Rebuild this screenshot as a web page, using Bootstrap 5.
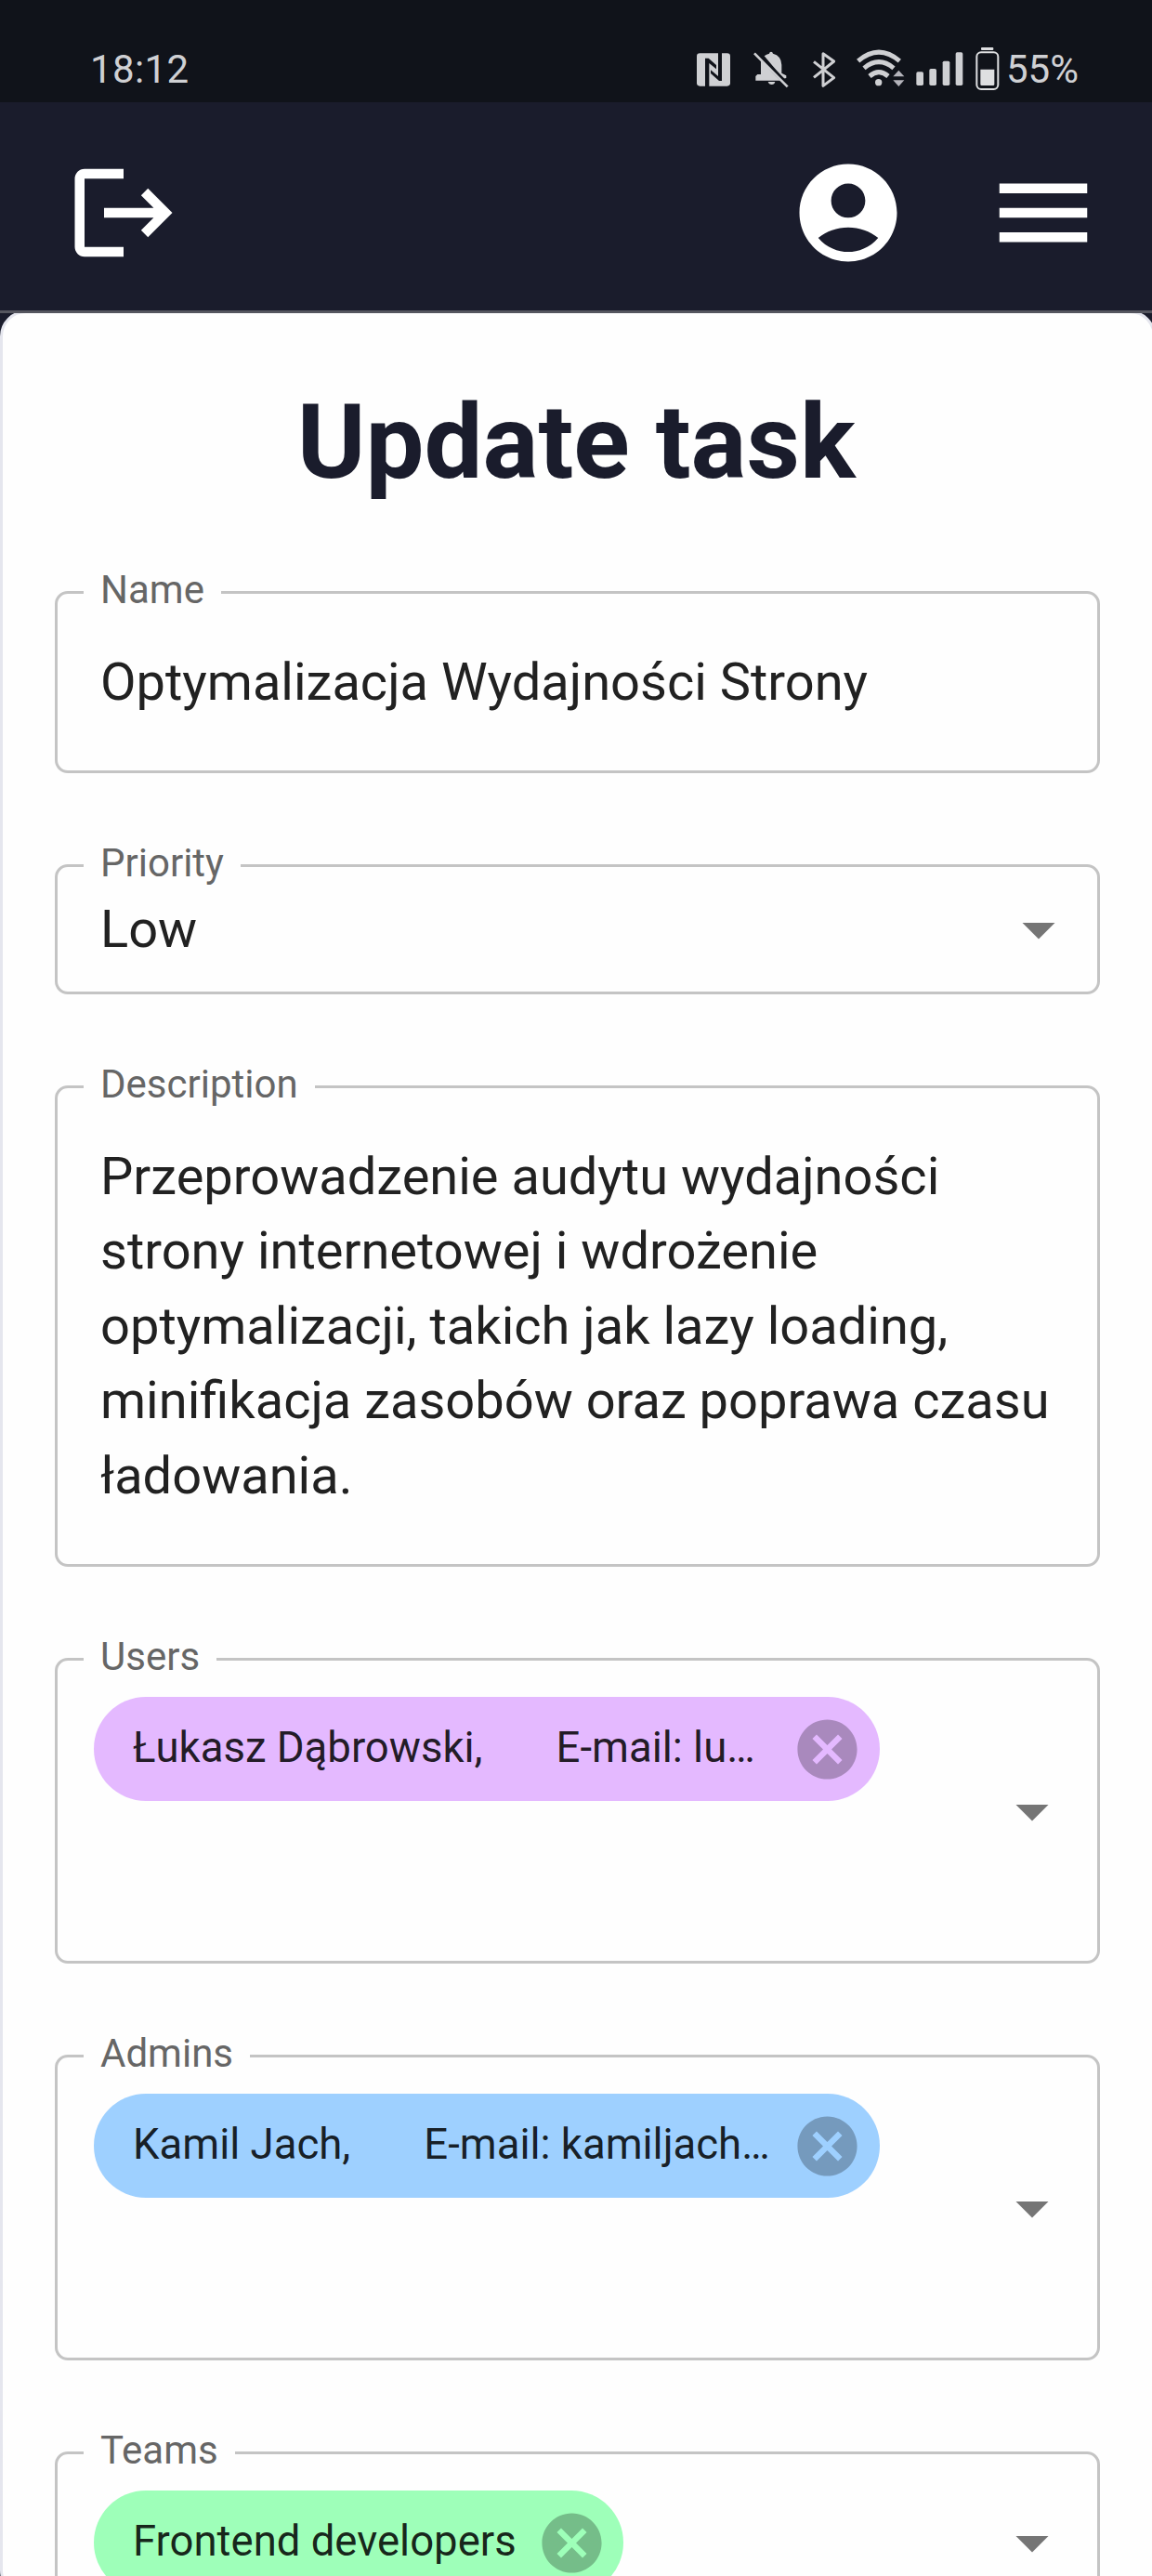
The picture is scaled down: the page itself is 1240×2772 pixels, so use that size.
<!DOCTYPE html>
<html lang="pl">
<head>
<meta charset="utf-8">
<meta name="viewport" content="width=device-width, initial-scale=1">
<title>Update task</title>
<link href="https://cdn.jsdelivr.net/npm/bootstrap@5.3.0/dist/css/bootstrap.min.css" rel="stylesheet">
<style>
  body { font-family: Roboto, "Liberation Sans", sans-serif; background: #1a1c2c; color: #212121; }
  .status-bar { height: 110px; padding: 37px 79px 0 97px; background: #10131a; color: #cfd0d3; font-size: 42px; line-height: 70px; }
  .status-bar svg { height: 48px; }
  .clock { letter-spacing: .4px; padding-top: 2px; }
  .g-bell { margin-left: 24.67px; }
  .g-bt { margin-left: 26px; }
  .g-wifi { margin-left: 22.33px; }
  .g-signal { margin-left: 12.67px; }
  .g-battery { margin-left: 13px; }
  .g-level { margin-left: 7.4px; padding-top: 2px; }
  .app-bar { height: 227px; padding: 55.75px 53.6px 0 70px; border-bottom: 3px solid #55565f; background: #1a1c2c; position: relative; z-index: 1; }
  .app-bar .tools { gap: 84px; }
  .app-bar svg { width: 126px; height: 126px; display: block; }
  .sheet { width: 1243.5px; height: 2460px; margin-top: -3px; padding: 71.5px 59px 0 56px; background: #fefefe; border: 3px solid #e5e6ee; border-radius: 28px; position: relative; z-index: 0; }
  .sheet h1 { font-size: 112px; line-height: 134px; color: #1a1c2c; margin-bottom: 93.5px; }
  .fields { gap: 98px; width: 1125px; }
  .field { border: 3px solid #c4c4c4; border-radius: 14px; padding: 54.75px 46px; font-size: 56px; line-height: 80.5px; }
  .field-select { padding: 26.75px 21px 26.75px 46px; height: 140px; }
  .field-multi { padding: 39px 28px 39px 39px; min-height: 329px; }
  .field-team { min-height: 196px; }
  .field-label { top: -34px; left: 28px; padding: 0 18px; background: #fefefe; color: #666; font-size: 42px; line-height: 60px; }
  .caret { width: 84px; height: 84px; fill: #757575; flex: none; }
  .pill { height: 112px; border-radius: 56px; padding: 0 17.5px 0 42px; font-size: 45.5px; line-height: 68px; color: rgba(0,0,0,.87); }
  .pill-text { padding-bottom: 3px; }
  .pill-wide { width: 845.5px; }
  .pill svg { width: 77px; height: 77px; fill: rgba(0,0,0,.26); }
  .pill-gap { padding-left: 79px; }
  .pill-user { background: #e4b9ff; }
  .pill-admin { background: #9ed0ff; }
  .pill-team { background: #9effb9; width: 570px; }
</style>
<script src="https://cdn.jsdelivr.net/npm/bootstrap@5.3.0/dist/js/bootstrap.bundle.min.js"></script>
</head>
<body>
<div class="vh-100 overflow-hidden">
  <div class="status-bar d-flex justify-content-between align-items-center">
    <span class="clock">18:12</span>
    <div class="d-flex align-items-center">
      <svg width="36" viewBox="93 60 108 144" fill="#cfd0d3"><rect x="93" y="82" width="108" height="106" rx="10"/><path d="M120 98h11l25 22v13l-23-19v75h-13zM162 81h12v90h-9l-27-24v-11l24 20z" fill="#10131a"/></svg>
      <svg class="g-bell" width="37.67" viewBox="275 60 113 144" fill="#cfd0d3"><path d="M299 104L346 155 362 170H282V156L288 150H299zM310 91Q317 85 326 83Q327 77 332 77Q337 77 338 83Q365 90 366 119V146L381 154V162L372 164zM322 174h23q-2 9-11 9t-12-9z"/><path d="M283 78L388 184" stroke="#10131a" stroke-width="10"/><path d="M278 82L385 190" stroke="#cfd0d3" stroke-width="8"/></svg>
      <svg class="g-bt" width="25" viewBox="466 60 75 144" fill="none" stroke="#cfd0d3" stroke-width="9"><path d="M469 109L534 161 499 187V83L534 108 469 160" stroke-linejoin="round"/></svg>
      <svg class="g-wifi" width="51.67" viewBox="608 60 155 144" fill="none" stroke="#cfd0d3" stroke-width="15"><path d="M613 107Q680 50 747 107M632 130Q680 90 728 130M650 156Q680 130 710 156"/><circle cx="679" cy="176" r="11" fill="#cfd0d3" stroke="none"/><path d="M726 157l18-20 18 20zM726 169h36l-18 20z" fill="#b4b4bb" stroke="none"/></svg>
      <svg class="g-signal" width="50.67" viewBox="801 60 152 144" fill="#cfd0d3"><rect x="802" y="142" width="23" height="44" rx="5"/><rect x="844" y="132" width="23" height="54" rx="5"/><rect x="887" y="107" width="23" height="79" rx="5"/><rect x="929" y="79" width="23" height="107" rx="5"/></svg>
      <svg class="g-battery" width="25.67" viewBox="992 60 77 144" fill="#dedfe1"><rect x="1010" y="63" width="40" height="9" rx="3"/><rect x="996" y="79" width="69" height="119" rx="14" fill="none" stroke="#dedfe1" stroke-width="6"/><path d="M1008 134h45v48q0 4-4 4h-37q-4 0-4-4z"/></svg>
      <span class="g-level">55%</span>
    </div>
  </div>

  <header class="app-bar d-flex justify-content-between align-items-start">
    <svg viewBox="0 0 24 24" fill="#fff"><path d="M17 7l-1.410 1.410L18.170 11H8v2h10.170l-2.580 2.580L17 17l5-5zM4 5h8V3H4c-1.100 0-2 .9-2 2v14c0 1.100.9 2 2 2h8v-2H4V5z"/></svg>
    <div class="tools d-flex">
      <svg viewBox="0 0 24 24" fill="#fff"><path d="M12 2C6.480 2 2 6.480 2 12s4.480 10 10 10 10-4.480 10-10S17.520 2 12 2zm0 4c1.930 0 3.500 1.570 3.500 3.500S13.930 13 12 13s-3.500-1.570-3.500-3.500S10.070 6 12 6zm0 14c-2.030 0-4.430-.82-6.140-2.880C7.550 15.800 9.680 15 12 15s4.450.8 6.140 2.120C16.430 19.180 14.030 20 12 20z"/></svg>
      <svg viewBox="0 0 24 24" fill="#fff"><path d="M3 18h18v-2H3v2zm0-5h18v-2H3v2zm0-7v2h18V6H3z"/></svg>
    </div>
  </header>

  <main class="sheet">
    <h1 class="text-center fw-bold">Update task</h1>
    <div class="fields d-flex flex-column">
      <div class="field position-relative">
        <span class="field-label position-absolute">Name</span>
        Optymalizacja Wydajności Strony
      </div>
      <div class="field field-select position-relative d-flex align-items-center justify-content-between">
        <span class="field-label position-absolute">Priority</span>
        <span>Low</span>
        <svg class="caret" viewBox="0 0 24 24"><path d="M7 10l5 5 5-5z"/></svg>
      </div>
      <div class="field position-relative">
        <span class="field-label position-absolute">Description</span>
        Przeprowadzenie audytu wydajności<br>strony internetowej i wdrożenie<br>optymalizacji, takich jak lazy loading,<br>minifikacja zasobów oraz poprawa czasu<br>ładowania.
      </div>
      <div class="field field-multi position-relative d-flex align-items-center justify-content-between">
        <span class="field-label position-absolute">Users</span>
        <div class="pill pill-wide pill-user d-flex align-items-center justify-content-between align-self-start">
          <span class="pill-text text-nowrap">Łukasz Dąbrowski,<span class="pill-gap">E-mail: lu…</span></span>
          <svg viewBox="0 0 24 24"><path d="M12 2C6.470 2 2 6.470 2 12s4.470 10 10 10 10-4.470 10-10S17.530 2 12 2zm5 13.590L15.590 17 12 13.410 8.410 17 7 15.590 10.590 12 7 8.410 8.410 7 12 10.590 15.590 7 17 8.410 13.410 12 17 15.590z"/></svg>
        </div>
        <svg class="caret" viewBox="0 0 24 24"><path d="M7 10l5 5 5-5z"/></svg>
      </div>
      <div class="field field-multi position-relative d-flex align-items-center justify-content-between">
        <span class="field-label position-absolute">Admins</span>
        <div class="pill pill-wide pill-admin d-flex align-items-center justify-content-between align-self-start">
          <span class="pill-text text-nowrap">Kamil Jach,<span class="pill-gap">E-mail: kamiljach…</span></span>
          <svg viewBox="0 0 24 24"><path d="M12 2C6.470 2 2 6.470 2 12s4.470 10 10 10 10-4.470 10-10S17.530 2 12 2zm5 13.590L15.590 17 12 13.410 8.410 17 7 15.590 10.590 12 7 8.410 8.410 7 12 10.590 15.590 7 17 8.410 13.410 12 17 15.590z"/></svg>
        </div>
        <svg class="caret" viewBox="0 0 24 24"><path d="M7 10l5 5 5-5z"/></svg>
      </div>
      <div class="field field-multi field-team position-relative d-flex align-items-center justify-content-between">
        <span class="field-label position-absolute">Teams</span>
        <div class="pill pill-team d-flex align-items-center justify-content-between align-self-start">
          <span class="pill-text text-nowrap">Frontend developers</span>
          <svg viewBox="0 0 24 24"><path d="M12 2C6.470 2 2 6.470 2 12s4.470 10 10 10 10-4.470 10-10S17.530 2 12 2zm5 13.590L15.590 17 12 13.410 8.410 17 7 15.590 10.590 12 7 8.410 8.410 7 12 10.590 15.590 7 17 8.410 13.410 12 17 15.590z"/></svg>
        </div>
        <svg class="caret" viewBox="0 0 24 24"><path d="M7 10l5 5 5-5z"/></svg>
      </div>
    </div>
  </main>
</div>
</body>
</html>
